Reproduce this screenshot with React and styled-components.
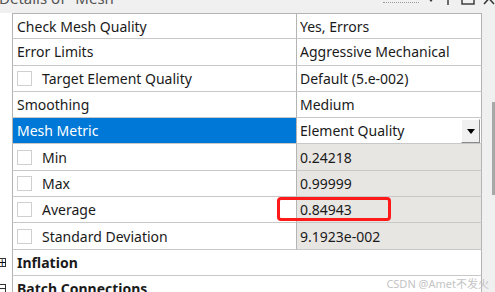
import styled, { createGlobalStyle } from 'styled-components';

const GlobalStyle = createGlobalStyle`
  body {
    margin: 0;
    background: #ffffff;
    font-family: "Noto Sans", "Open Sans", "Noto Sans CJK SC", sans-serif;
  }
`;

const rows = [
  { label: 'Check Mesh Quality', value: 'Yes, Errors' },
  { label: 'Error Limits', value: 'Aggressive Mechanical' },
  { label: 'Target Element Quality', value: 'Default (5.e-002)', check: true },
  { label: 'Smoothing', value: 'Medium' },
  { label: 'Mesh Metric', value: 'Element Quality', selected: true, dropdown: true },
  { label: 'Min', value: '0.24218', check: true, readonly: true },
  { label: 'Max', value: '0.99999', check: true, readonly: true },
  { label: 'Average', value: '0.84943', check: true, readonly: true },
  { label: 'Standard Deviation', value: '9.1923e-002', check: true, readonly: true },
];

const groups = [
  { label: 'Inflation', open: false },
  { label: 'Batch Connections', open: true },
];

function App() {
  return (
    <>
      <GlobalStyle />
      <Page>
        <TitleBar>
          <Title>Details of "Mesh"</Title>
          <TitleTools>
            <Dots />
            <svg width="8" height="12" viewBox="0 0 8 12">
              <path d="M1 6 L7 6 L4 10 Z" fill="#333" />
            </svg>
            <svg width="10" height="14" viewBox="0 0 10 14">
              <path d="M2 1 H8 M3 1 V7 M7 1 V7 M1 7 H9 M5 7 V13" stroke="#333" strokeWidth="1.4" fill="none" />
            </svg>
            <svg width="14" height="14" viewBox="0 0 14 14">
              <rect x="1" y="1" width="12" height="11" stroke="#333" strokeWidth="1.4" fill="none" />
            </svg>
            <svg width="12" height="14" viewBox="0 0 12 14">
              <path d="M1 1 L11 12 M11 1 L1 12" stroke="#333" strokeWidth="1.5" />
            </svg>
          </TitleTools>
        </TitleBar>
        <Body>
          <Grid>
            {rows.map((r, i) => (
              <Row key={r.label} $first={i === 0}>
                <Gutter />
                <LabelCell $selected={r.selected}>
                  {r.check && <CheckBox />}
                  {r.label}
                </LabelCell>
                <ValueCell $readonly={r.readonly}>
                  {r.value}
                  {r.dropdown && (
                    <DropButton>
                      <svg width="8" height="5" viewBox="0 0 8 5">
                        <path d="M0 0 H8 L4 5 Z" fill="#000" />
                      </svg>
                    </DropButton>
                  )}
                </ValueCell>
              </Row>
            ))}
            {groups.map(g => (
              <Row key={g.label}>
                <Gutter>
                  <Expander>{g.open ? '−' : '+'}</Expander>
                </Gutter>
                <GroupCell>{g.label}</GroupCell>
              </Row>
            ))}
          </Grid>
          <ScrollTrack>
            <ScrollThumb />
          </ScrollTrack>
        </Body>
        <Highlight />
        <Watermark>CSDN @Amet不发火</Watermark>
      </Page>
    </>
  );
}

export default App;

const Page = styled.div`
  position: relative;
  width: 495px;
  height: 292px;
  overflow: hidden;
  background: #ffffff;
`;

const TitleBar = styled.div`
  height: 13px;
  background: #f0f0f0;
  display: flex;
  justify-content: space-between;
  overflow: hidden;
`;

const Title = styled.div`
  margin-top: -12px;
  margin-left: -1px;
  font-size: 15px;
  line-height: 20px;
  color: #555555;
  white-space: nowrap;
`;

const TitleTools = styled.div`
  display: flex;
  align-items: flex-start;
  gap: 8px;
  margin-top: -8px;
  svg {
    display: block;
  }
`;

const Dots = styled.div`
  width: 36px;
  margin-top: 10px;
  border-top: 1px dotted #9a9a9a;
`;

const Body = styled.div`
  display: flex;
  height: 279px;
`;

const Grid = styled.div`
  width: 482px;
  flex: none;
`;

const Row = styled.div`
  display: grid;
  grid-template-columns: 12px 284px 186px;
  height: 26.3px;
  font-size: 14px;
  color: #1a1a1a;

  & > div:not(:first-child) {
    border-top: ${p => (p.$first ? '1px solid #b4b4b4' : 'none')};
  }
`;

const Gutter = styled.div`
  position: relative;
  background: #ffffff;
`;

const Cell = styled.div`
  display: flex;
  align-items: center;
  box-sizing: border-box;
  border-left: 1px solid #b4b4b4;
  border-bottom: 1px solid #c8c8c8;
  white-space: nowrap;
  overflow: hidden;
`;

const LabelCell = styled(Cell)`
  padding-left: 4px;
  background: ${p => (p.$selected ? '#0078d7' : '#ffffff')};
  color: ${p => (p.$selected ? '#ffffff' : '#1a1a1a')};
`;

const ValueCell = styled(Cell)`
  position: relative;
  padding-left: 3px;
  border-right: 1px solid #b4b4b4;
  background: ${p => (p.$readonly ? '#e8e6e3' : '#ffffff')};
`;

const GroupCell = styled(Cell)`
  grid-column: 2 / 4;
  padding-left: 4px;
  font-weight: 700;
  border-right: 1px solid #b4b4b4;
`;

const CheckBox = styled.span`
  width: 13px;
  height: 13px;
  margin-right: 10px;
  border: 1px solid #cfcfcf;
  background: #ffffff;
  flex: none;
`;

const DropButton = styled.span`
  position: absolute;
  right: 1px;
  top: 1px;
  bottom: 0;
  width: 17px;
  display: flex;
  align-items: center;
  justify-content: center;
  background: #f0f0f0;
  border-top: 1px solid #ffffff;
  border-left: 1px solid #ffffff;
  border-right: 1px solid #8a8a8a;
  border-bottom: 1px solid #8a8a8a;
`;

const Expander = styled.span`
  position: absolute;
  left: -3px;
  top: 8px;
  width: 9px;
  height: 9px;
  box-sizing: border-box;
  border: 1px solid #333333;
  font-size: 10px;
  line-height: 7px;
  text-align: center;
  font-family: "DejaVu Sans", sans-serif;
  color: #000000;
  background: #ffffff;
`;

const ScrollTrack = styled.div`
  flex: 1;
  background: #f0f0f0;
  position: relative;
`;

const ScrollThumb = styled.div`
  position: absolute;
  left: 10px;
  right: -4px;
  top: 89px;
  height: 93px;
  background: #a8a8a8;
`;

const Highlight = styled.div`
  position: absolute;
  left: 277px;
  top: 197px;
  width: 114px;
  height: 24px;
  box-sizing: border-box;
  border: 3px solid #ff1a1a;
  border-radius: 4px;
`;

const Watermark = styled.div`
  position: absolute;
  right: 6px;
  top: 275px;
  font-size: 11px;
  color: #c4c4c4;
  white-space: nowrap;
`;
